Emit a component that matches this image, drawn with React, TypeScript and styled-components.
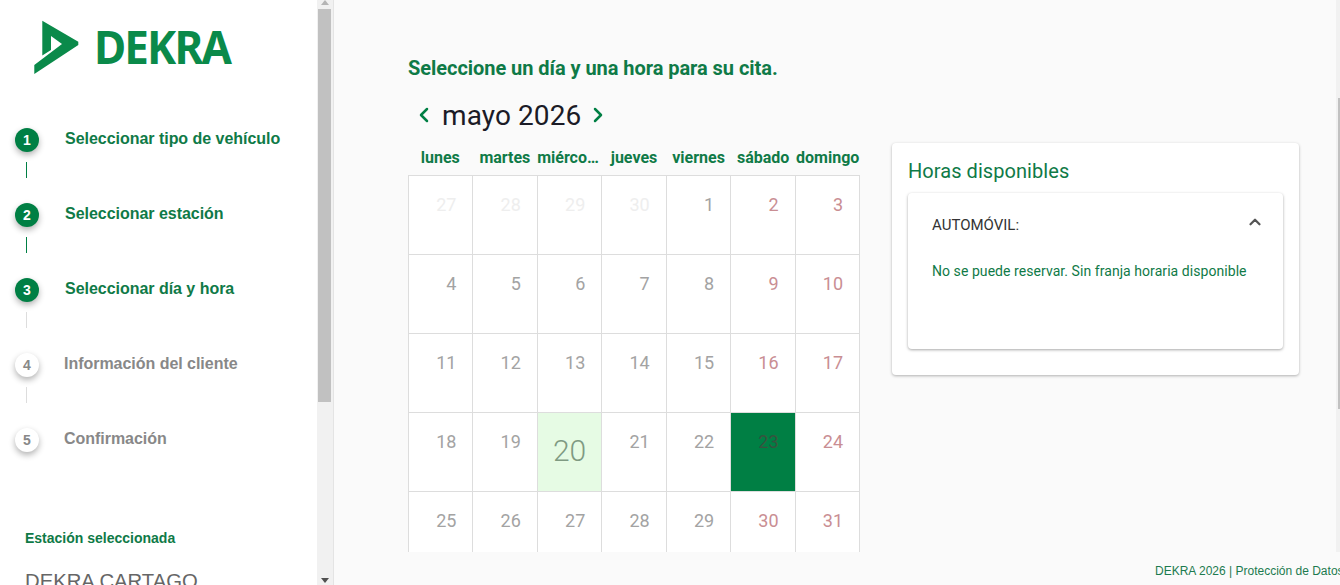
import React from 'react';
import styled, { createGlobalStyle } from 'styled-components';
import { ChevronLeft, ChevronRight, ChevronUp } from 'lucide-react';

const GREEN = '#007f44';
const TEXT_GREEN = '#0f7a47';

const GlobalStyle = createGlobalStyle`
  html, body { margin: 0; padding: 0; height: 100%; overflow: hidden; }
  body { font-family: Roboto, "Liberation Sans", sans-serif; background: #fafafa; }
  * { box-sizing: border-box; }
`;

const Page = styled.div`
  display: flex;
  width: 1340px;
  height: 585px;
  overflow: hidden;
`;

/* sidebar */
const Sidebar = styled.aside`
  display: flex;
  flex: 0 0 334px;
  height: 585px;
  background: #fff;
  border-right: 1px solid #e4e4e4;
`;
const SideContent = styled.div`
  flex: 0 0 317px;
  height: 585px;
  overflow: hidden;
  font-family: "Liberation Sans", Arial, sans-serif;
`;
const LogoBlock = styled.div`
  height: 128px;
`;
const LogoWord = styled.text`
  font-family: "Noto Sans", sans-serif;
  font-weight: 700;
  font-size: 47px;
  letter-spacing: -2px;
  fill: #0a8a4a;
`;
const StepRow = styled.div`
  display: flex;
  height: 75px;
  padding-left: 15px;
`;
const StepMarker = styled.div`
  display: flex;
  flex-direction: column;
  align-items: center;
  gap: 10px;
  width: 24px;
`;
const StepCircle = styled.div<{ $done: boolean }>`
  display: flex;
  align-items: center;
  justify-content: center;
  width: 24px;
  height: 24px;
  border-radius: 50%;
  font-size: 14px;
  font-weight: 700;
  color: ${p => (p.$done ? '#fff' : '#888')};
  background: ${p => (p.$done ? GREEN : '#fff')};
  box-shadow: 0 3px 6px rgba(0, 0, 0, 0.3);
`;
const StepLine = styled.div<{ $done: boolean }>`
  width: 1px;
  height: 16px;
  margin-right: 1px;
  background: ${p => (p.$done ? GREEN : '#ddd')};
`;
const StepLabel = styled.div<{ $done: boolean }>`
  margin-left: ${p => (p.$done ? '26px' : '25px')};
  font-size: 16px;
  line-height: 22px;
  font-weight: 700;
  letter-spacing: -0.03px;
  white-space: nowrap;
  color: ${p => (p.$done ? TEXT_GREEN : '#888')};
`;
const StationTitle = styled.div`
  margin: 27px 0 0 25px;
  font-size: 14px;
  line-height: 16px;
  font-weight: 700;
  color: ${TEXT_GREEN};
`;
const StationName = styled.div`
  margin: 23px 0 0 25px;
  font-size: 20.3px;
  line-height: 24px;
  color: #666;
  white-space: nowrap;
`;
const SideTrack = styled.div`
  position: relative;
  flex: 0 0 16px;
  height: 585px;
  background: #f1f1f1;
`;
const SideThumb = styled.div`
  width: 13px;
  height: 393px;
  margin: 9px 0 0 1px;
  background: #c1c1c1;
`;
const ArrowUp = styled.svg`
  position: absolute;
  top: 0;
  left: 4px;
`;
const ArrowDown = styled.svg`
  position: absolute;
  bottom: 2px;
  left: 4px;
`;

/* main */
const Main = styled.main`
  display: flex;
  flex-direction: column;
  flex: 1;
  min-width: 0;
  background: #fafafa;
`;
const ScrollArea = styled.div`
  display: flex;
  height: 552px;
  overflow: hidden;
`;
const Content = styled.div`
  display: flex;
  flex: 1;
  padding: 54px 0 0 74px;
`;
const CalendarCol = styled.section`
  flex: 0 0 452px;
`;
const Heading = styled.h2`
  margin: 0;
  font-size: 20px;
  line-height: 28px;
  font-weight: 700;
  letter-spacing: -0.05px;
  color: ${TEXT_GREEN};
  white-space: nowrap;
`;
const MonthRow = styled.div`
  display: flex;
  align-items: center;
  height: 40px;
  margin-top: 13px;
  padding-left: 4px;
  color: ${GREEN};
`;
const MonthName = styled.div`
  margin: 0 5px 0 6px;
  font-size: 28px;
  letter-spacing: 0.1px;
  color: #1b1b26;
`;
const Weekdays = styled.div`
  display: grid;
  grid-template-columns: repeat(7, 1fr);
  height: 24px;
  margin: 10px 0 6px;
`;
const Weekday = styled.div`
  overflow: hidden;
  font-size: 16px;
  line-height: 26px;
  font-weight: 700;
  text-align: center;
  text-overflow: ellipsis;
  white-space: nowrap;
  color: ${TEXT_GREEN};
`;
const DayGrid = styled.div`
  display: grid;
  grid-template-columns: repeat(7, 1fr);
  grid-auto-rows: 79px;
  border-top: 1px solid #ddd;
  border-left: 1px solid #ddd;
`;
type DayKind = 'past' | 'normal' | 'weekend' | 'today' | 'selected';
const dayColor: Record<DayKind, string> = {
  past: '#eeeeee',
  normal: '#a3a3a3',
  weekend: '#c98e93',
  today: '#7f9a82',
  selected: '#37533f',
};
const Day = styled.div<{ $kind: DayKind }>`
  padding: ${p => (p.$kind === 'today' ? '0' : '18px 16px 0 0')};
  border-right: 1px solid #ddd;
  border-bottom: 1px solid #ddd;
  font-size: ${p => (p.$kind === 'today' ? '30px' : '18px')};
  line-height: ${p => (p.$kind === 'today' ? '76px' : '22px')};
  font-weight: ${p => (p.$kind === 'today' ? 300 : 400)};
  text-align: ${p => (p.$kind === 'today' ? 'center' : 'right')};
  color: ${p => dayColor[p.$kind]};
  background: ${p => (p.$kind === 'today' ? '#e6fbe4' : p.$kind === 'selected' ? GREEN : '#fff')};
`;

const Panel = styled.section`
  flex: 0 0 407px;
  align-self: flex-start;
  margin: 89px 0 0 32px;
  padding: 16px 16px 26px;
  border-radius: 4px;
  background: #fff;
  box-shadow: 0 1px 3px rgba(0, 0, 0, 0.3);
`;
const PanelTitle = styled.h3`
  margin: 0 0 10px;
  font-size: 20px;
  line-height: 24px;
  font-weight: 400;
  letter-spacing: 0.06px;
  color: ${TEXT_GREEN};
`;
const Accordion = styled.div`
  height: 156px;
  padding: 20px 19px 0 24px;
  border-radius: 4px;
  background: #fff;
  box-shadow: 0 1px 3px rgba(0, 0, 0, 0.35);
`;
const AccordionHead = styled.div`
  display: flex;
  justify-content: space-between;
  align-items: flex-start;
  font-size: 15px;
  line-height: 24px;
  color: #333;
`;
const AccordionIcon = styled.div`
  height: 18px;
  color: #555;
`;
const NoSlots = styled.div`
  margin-top: 24px;
  font-size: 14px;
  line-height: 20px;
  letter-spacing: 0.06px;
  color: ${TEXT_GREEN};
`;
const MainTrack = styled.div`
  flex: 0 0 4px;
  padding: 98px 0 0 2px;
  background: #f1f1f1;
`;
const MainThumb = styled.div`
  width: 2px;
  height: 311px;
  background: #c1c1c1;
`;
const Footer = styled.footer`
  height: 33px;
  padding: 11px 0 0 821px;
  overflow: hidden;
  font-family: "Liberation Sans", Arial, sans-serif;
  font-size: 12px;
  line-height: 16px;
  white-space: nowrap;
  color: #1c7a4f;
`;

const steps = [
  { label: 'Seleccionar tipo de vehículo', done: true },
  { label: 'Seleccionar estación', done: true },
  { label: 'Seleccionar día y hora', done: true },
  { label: 'Información del cliente', done: false },
  { label: 'Confirmación', done: false },
];

const weekdays = ['lunes', 'martes', 'miércoles', 'jueves', 'viernes', 'sábado', 'domingo'];

const days = [27, 28, 29, 30, ...Array.from({ length: 31 }, (_, i) => i + 1)];

const kindOf = (day: number, i: number): DayKind => {
  if (i < 4) return 'past';
  if (day === 20) return 'today';
  if (day === 23) return 'selected';
  return i % 7 >= 5 ? 'weekend' : 'normal';
};

const Logo = () => (
  <svg width="260" height="90" viewBox="0 0 260 90">
    <polygon
      fill="#0a8a4a"
      points="42.3,20.7 78.3,41.7 78.3,45 34.3,74 34.3,65 62,44 51,36 51,50 42.3,55.5"
    />
    <LogoWord x="94" y="63.5" textLength="136" lengthAdjust="spacingAndGlyphs">
      DEKRA
    </LogoWord>
  </svg>
);

export default function App() {
  return (
    <Page>
      <GlobalStyle />
      <Sidebar>
        <SideContent>
          <LogoBlock>
            <Logo />
          </LogoBlock>
          {steps.map((step, i) => (
            <StepRow key={step.label}>
              <StepMarker>
                <StepCircle $done={step.done}>{i + 1}</StepCircle>
                {i < steps.length - 1 && <StepLine $done={i < 2} />}
              </StepMarker>
              <StepLabel $done={step.done}>{step.label}</StepLabel>
            </StepRow>
          ))}
          <StationTitle>Estación seleccionada</StationTitle>
          <StationName>DEKRA CARTAGO</StationName>
        </SideContent>
        <SideTrack>
          <ArrowUp width="8" height="5" viewBox="0 0 8 5">
            <polygon points="4,0 8,5 0,5" fill="#b5b5b5" />
          </ArrowUp>
          <SideThumb />
          <ArrowDown width="8" height="5" viewBox="0 0 8 5">
            <polygon points="0,0 8,0 4,5" fill="#505050" />
          </ArrowDown>
        </SideTrack>
      </Sidebar>
      <Main>
        <ScrollArea>
          <Content>
            <CalendarCol>
              <Heading>Seleccione un día y una hora para su cita.</Heading>
              <MonthRow>
                <ChevronLeft size={24} strokeWidth={2.5} />
                <MonthName>mayo 2026</MonthName>
                <ChevronRight size={24} strokeWidth={2.5} />
              </MonthRow>
              <Weekdays>
                {weekdays.map(d => (
                  <Weekday key={d}>{d}</Weekday>
                ))}
              </Weekdays>
              <DayGrid>
                {days.map((day, i) => (
                  <Day key={i} $kind={kindOf(day, i)}>
                    {day}
                  </Day>
                ))}
              </DayGrid>
            </CalendarCol>
            <Panel>
              <PanelTitle>Horas disponibles</PanelTitle>
              <Accordion>
                <AccordionHead>
                  AUTOMÓVIL:
                  <AccordionIcon>
                    <ChevronUp size={18} strokeWidth={3} />
                  </AccordionIcon>
                </AccordionHead>
                <NoSlots>No se puede reservar. Sin franja horaria disponible</NoSlots>
              </Accordion>
            </Panel>
          </Content>
          <MainTrack>
            <MainThumb />
          </MainTrack>
        </ScrollArea>
        <Footer>DEKRA 2026 | Protección de Datos</Footer>
      </Main>
    </Page>
  );
}
